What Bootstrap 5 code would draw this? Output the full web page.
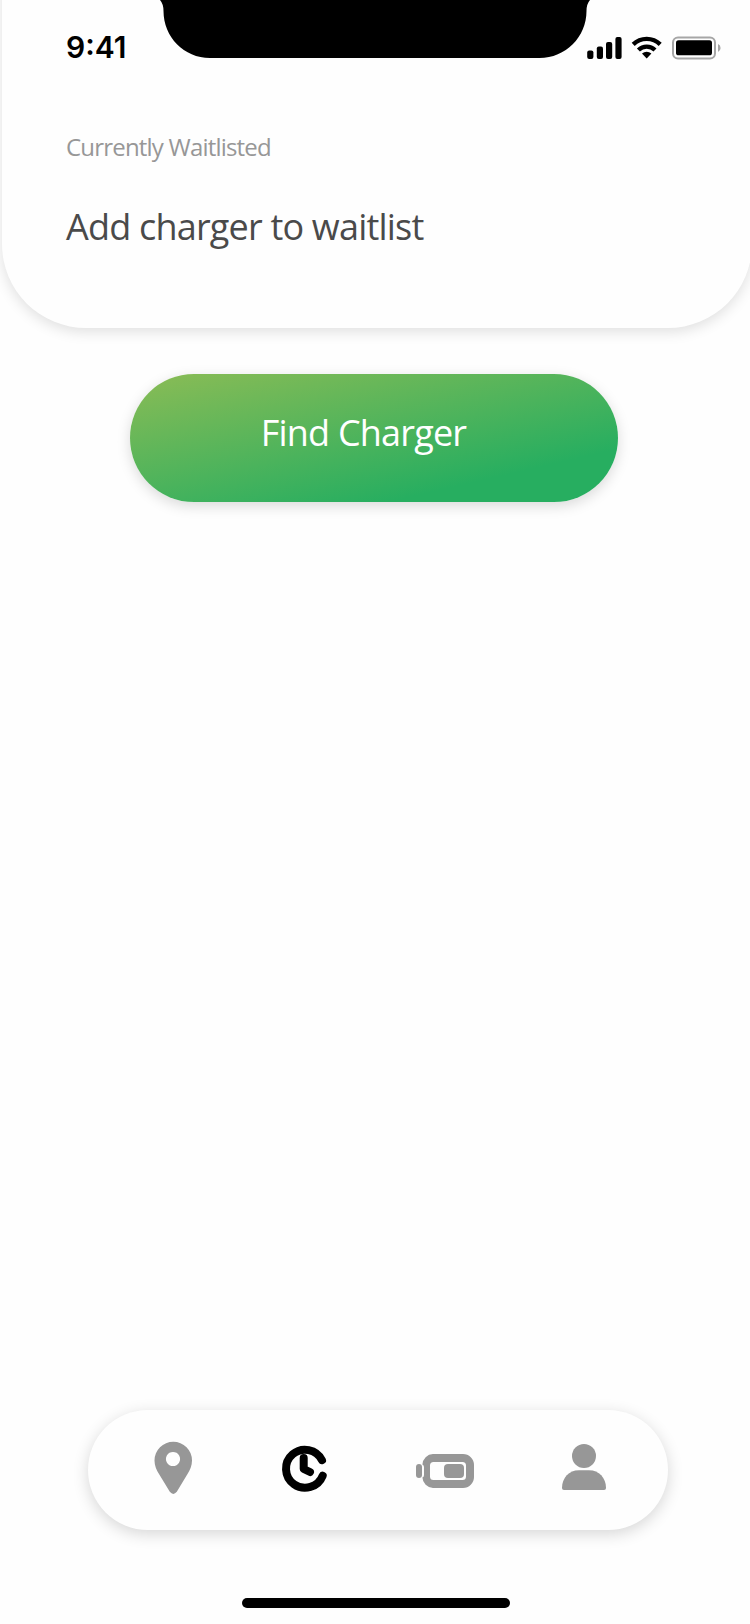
<!DOCTYPE html>
<html lang="en">
<head>
<meta charset="utf-8">
<meta name="viewport" content="width=device-width, initial-scale=1">
<title>Waitlist</title>
<link href="https://cdn.jsdelivr.net/npm/bootstrap@5.3.0/dist/css/bootstrap.min.css" rel="stylesheet">
<style>
  body { background: #fefefe; font-family: "Open Sans", sans-serif; }
  .screen { width: 750px; height: 1624px; }
  .top-panel { width: 750px; height: 358px; margin: -30px 0 0 2px; padding-top: 30px; background: #fefefe; border-radius: 0 0 84px 84px; box-shadow: 0 4px 14px rgba(0,0,0,.12); }
  .status-bar { height: 58px; padding-left: 64px; }
  .clock-text { width: 93px; padding-top: 29px; font: 600 30px/37px Inter, sans-serif; color: #000; }
  .status-icons { margin: 30px 0 0 -6px; }
  .panel-body { padding: 72px 64px 0; }
  .panel-label { font-size: 24px; line-height: 33px; color: #979797; letter-spacing: -.8px; }
  .panel-title { font-size: 36px; line-height: 49px; margin-top: 39px; color: #4a4a4a; letter-spacing: -.8px; font-weight: 400; }
  .btn-find { width: 488px; height: 128px; margin: 46px 2px 0 0; padding: 0 21px 10px 0; border: 0; color: #fff; font-size: 36px; letter-spacing: -.8px; background: linear-gradient(167deg, #8bbc55 0%, #27ae60 78%); box-shadow: 0 4px 14px rgba(0,0,0,.15); }
  .btn-find:hover { color: #fff; }
  .tab-bar { width: 580px; height: 120px; margin-left: 88px; padding: 0 60px 0 63px; background: #fefefe; box-shadow: 0 4px 16px rgba(0,0,0,.16); }
  .tab-bar a { color: #979797; line-height: 0; }
  .tab-bar a.active { color: #000; }
  .home-bar { width: 268px; height: 10px; margin: 68px 0 16px 242px; background: #000; }
</style>
</head>
<body>
<div class="screen d-flex flex-column overflow-hidden">
  <header class="top-panel flex-shrink-0">
    <div class="status-bar d-flex">
      <div class="clock-text text-nowrap">9:41</div>
      <!-- notch -->
      <svg width="432" height="58" viewBox="0 0 432 58"><path d="M1 0Q4.500 4 4.500 11C4.500 37 25 58 51 58H380.500C406.500 58 427.500 37 427.500 11Q427.500 4 431 0Z"/></svg>
      <!-- signal, wifi, battery -->
      <svg class="status-icons flex-shrink-0" width="135" height="34" viewBox="585 30 135 34" overflow="visible">
        <g><rect x="587.2" y="50.5" width="6.2" height="8.5" rx="2"/><rect x="596.8" y="46.5" width="6.2" height="12.5" rx="2"/><rect x="606" y="42" width="6.2" height="17" rx="2"/><rect x="615.4" y="37" width="6.2" height="22" rx="2"/></g>
        <g fill="none" stroke="#000" stroke-width="4.3"><path d="M633.2 44.4a19.2 19.2 0 0 1 27 0"/><path d="M638.4 50a12 12 0 0 1 16.6 0"/></g>
        <path d="M642 53.6a7.2 7.2 0 0 1 9.4 0L646.7 58.4Z"/>
        <rect x="673" y="37.5" width="42" height="21" rx="5" fill="none" stroke="#a6a6a6" stroke-width="2"/>
        <rect x="676" y="40.3" width="36" height="15" rx="2.6"/>
        <path d="M718 44v8q2.600-1.200 2.600-4T718 44Z" fill="#a6a6a6"/>
      </svg>
    </div>
    <div class="panel-body">
      <div class="panel-label text-nowrap">Currently Waitlisted</div>
      <h1 class="panel-title mb-0 text-nowrap">Add charger to waitlist</h1>
    </div>
  </header>
  <main class="flex-grow-1 text-center">
    <button type="button" class="btn btn-find rounded-pill">Find Charger</button>
  </main>
  <nav class="tab-bar rounded-pill d-flex align-items-center justify-content-between flex-shrink-0">
    <a href="#" aria-label="Map"><svg width="44" height="60" viewBox="151 1440 44 60"><path fill="currentColor" fill-rule="evenodd" d="M173.3 1441.7A18.8 18.8 0 0 1 192 1460.5C192 1466 190 1470 187.5 1474L176.8 1491.8Q173.3 1496 169.8 1491.8L159 1474C156.500 1470 154.500 1466 154.500 1460.500A18.800 18.800 0 0 1 173.300 1441.700ZM173 1451.900a7.100 7.100 0 1 0 .01 0Z"/></svg></a>
    <a href="#" class="active" aria-label="Waitlist"><svg width="50" height="60" viewBox="279.300 1440 50 60"><g fill="none" stroke="currentColor" stroke-width="8" stroke-linecap="round" stroke-linejoin="round"><path d="M322.300 1460.200A19 19 0 1 0 323 1475.700"/><path d="M304 1458V1469L310.300 1472"/></g></svg></a>
    <a href="#" aria-label="Charge"><svg width="62" height="60" viewBox="414 1440 62 60"><g fill="currentColor"><path fill-rule="evenodd" d="M433 1454H463A11 11 0 0 1 474 1465V1477A11 11 0 0 1 463 1488H433A11 11 0 0 1 422.400 1477.500Q424 1477 424 1475V1467Q424 1465 422.400 1464.500A11 11 0 0 1 433 1454ZM433.500 1462A3.500 3.500 0 0 0 430 1465.500V1476.500A3.500 3.500 0 0 0 433.500 1480H462.500A3.500 3.500 0 0 0 466 1476.500V1465.500A3.500 3.500 0 0 0 462.500 1462Z"/><rect x="444" y="1464" width="20" height="14" rx="4"/><rect x="416" y="1464" width="6" height="14" rx="3"/></g></svg></a>
    <a href="#" aria-label="Profile"><svg width="48" height="60" viewBox="560 1440 48 60"><g fill="currentColor"><circle cx="584" cy="1456" r="12"/><path d="M562 1488C562 1478 569 1470.300 579 1470.300H589C599 1470.300 606 1478 606 1488Q606 1490 604 1490H564Q562 1490 562 1488Z"/></g></svg></a>
  </nav>
  <div class="home-bar rounded-pill flex-shrink-0"></div>
</div>
<script src="https://cdn.jsdelivr.net/npm/bootstrap@5.3.0/dist/js/bootstrap.bundle.min.js"></script>
</body>
</html>
